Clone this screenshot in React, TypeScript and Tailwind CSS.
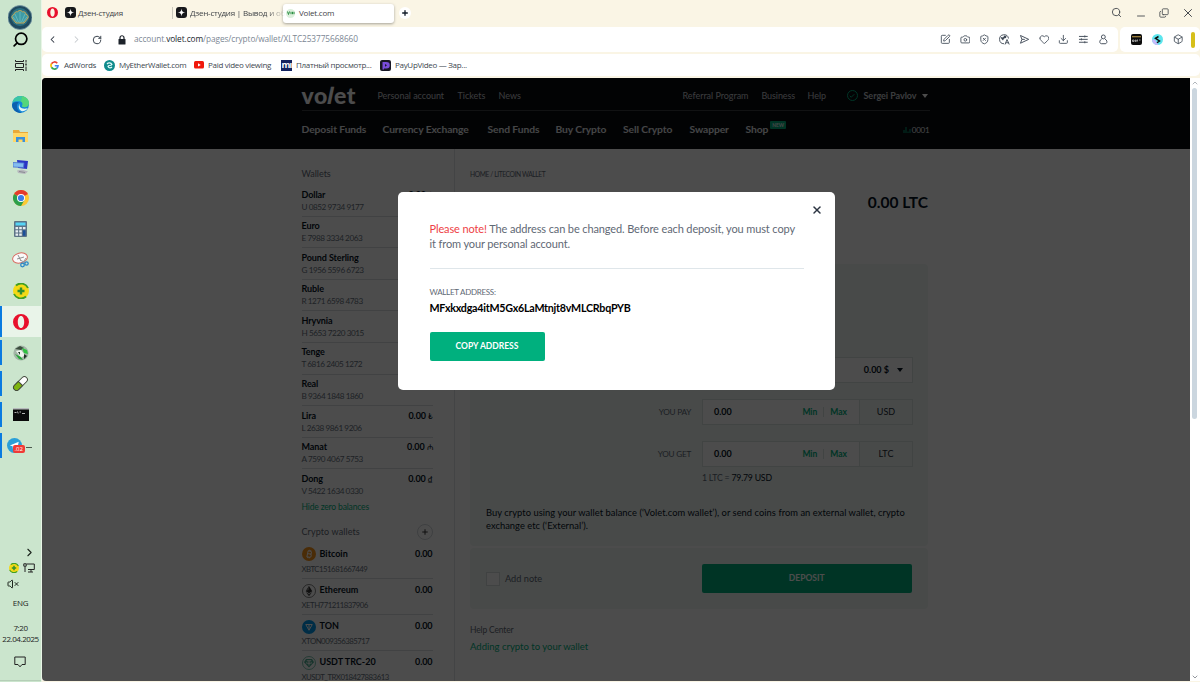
import React from "react";
import {
  Box,
  Camera,
  ChevronLeft,
  ChevronRight,
  ChevronUp,
  Check,
  Copy,
  Download,
  Heart,
  Minus,
  Plus,
  RotateCw,
  Search,
  ShieldX,
  SquarePen,
  VolumeX,
  X,
} from "lucide-react";

const wallets = [
  { name: "Dollar", number: "U 0852 9734 9177", sign: "$" },
  { name: "Euro", number: "E 7988 3334 2063", sign: "€" },
  { name: "Pound Sterling", number: "G 1956 5596 6723", sign: "£" },
  { name: "Ruble", number: "R 1271 6598 4783", sign: "₽" },
  { name: "Hryvnia", number: "H 5653 7220 3015", sign: "₴" },
  { name: "Tenge", number: "T 6816 2405 1272", sign: "₸" },
  { name: "Real", number: "B 9364 1848 1860", sign: "R$" },
  { name: "Lira", number: "L 2638 9861 9206", sign: "₺" },
  { name: "Manat", number: "A 7590 4067 5753", sign: "₼" },
  { name: "Dong", number: "V 5422 1634 0330", sign: "₫" },
];

const OperaIcon = ({ size }: { size: number }) => (
  <svg width={size} height={size} viewBox="0 0 16 16">
    <path
      fillRule="evenodd"
      fill="#e8102c"
      d="M8 0a8 8 0 1 0 0 16A8 8 0 0 0 8 0zm0 2c2 0 3.2 2.700 3.200 6S10 14 8 14 4.800 11.300 4.800 8 6 2 8 2z"
    />
  </svg>
);

const ZenIcon = () => (
  <svg width="11" height="11" viewBox="0 0 22 22" className="shrink-0">
    <rect width="22" height="22" rx="6" fill="#17181b" />
    <path d="M11 3c.3 5.500 2.500 7.700 8 8-5.500.3-7.700 2.500-8 8-.3-5.500-2.500-7.700-8-8 5.500-.3 7.700-2.500 8-8z" fill="#fff" />
  </svg>
);

const PlusBallIcon = ({ size }: { size: number }) => (
  <svg width={size} height={size} viewBox="0 0 16 16">
    <circle cx="8" cy="8" r="8" fill="#f4d916" />
    <path d="M1 11a7.600 7.600 0 0 0 12 2.500M15 5A7.600 7.600 0 0 0 3 2.500" stroke="#3f9f27" strokeWidth="1.800" fill="none" />
    <path d="M8 4.500v7M4.500 8h7" stroke="#2f8f2f" strokeWidth="2.400" />
  </svg>
);

const EdgeIcon = () => (
  <svg width="17" height="17" viewBox="0 0 16 16">
    <circle cx="8" cy="8" r="8" fill="#1488d8" />
    <path d="M.4 6C1.500 2 4.500 0 8 0c5 0 8 3.500 8 6.600 0 2.600-2 4-4.200 4-2 0-2.800-.9-2.200-1.600.9-1.300.2-3.800-2.700-4C4.200 4.700 1.800 5.300.4 6z" fill="#3bc7a4" />
    <path d="M9.500 0C14 1 16 4 16 6.600c0 2.600-2 4-4.200 4-2 0-2.800-.9-2.200-1.600.9-1.300.5-3-1-3.700z" fill="#5fdd6a" opacity=".7" />
    <path d="M6.500 6C3 8 4.500 14.500 9.500 15.800 5 16.600.4 13.500 0 8.500.4 6 3.500 5 6.500 6z" fill="#0d5fae" />
    <path d="M7.200 7.300c-1 3 2 5.800 7.600 4.200-1.600 2.400-4 3-5.400 2.800-2.800-.6-4-4.600-2.200-7z" fill="#e4f5f3" />
  </svg>
);

const FolderIcon = () => (
  <svg width="15" height="14" viewBox="0 0 15 14">
    <path d="M0 1h6l1 2h8v10H0z" fill="#e9a93a" />
    <path d="M0 4h15v9H0z" fill="#ffd766" />
    <path d="M3 13V8h9v5h-2.500v-2.500h-4V13z" fill="#3a91dc" />
  </svg>
);

const RemoteIcon = () => (
  <svg width="16" height="16" viewBox="0 0 16 16">
    <path d="M4 1l11 1-1 8-9-1z" fill="#2a35c5" />
    <path d="M0 3.500l11 .5-.5 4.500L0 8z" fill="#84bdf0" stroke="#4a72ce" strokeWidth=".8" />
    <path d="M4 11.500l5-1 6 2-3 2.500-7-1z" fill="#b6b8bd" />
    <path d="M6 12.500l6 1" stroke="#7d8088" strokeWidth=".8" />
  </svg>
);

const ChromeIcon = () => (
  <svg width="16" height="16" viewBox="0 0 16 16">
    <circle cx="8" cy="8" r="8" fill="#fcc934" />
    <path d="M8 8L1.070 4A8 8 0 0 1 14.930 4z" fill="#e33b2e" />
    <path d="M8 8L1.070 4A8 8 0 0 0 8 16l3.500-6z" fill="#2c9f4b" />
    <circle cx="8" cy="8" r="4" fill="#fff" />
    <circle cx="8" cy="8" r="3.100" fill="#3b7de9" />
  </svg>
);

const CalculatorIcon = () => (
  <svg width="13" height="16" viewBox="0 0 13 16">
    <rect width="13" height="16" rx="1" fill="#5d7386" />
    <rect x="1.500" y="1.500" width="10" height="3" fill="#55d4f5" />
    <path d="M1.500 6h2.600v2.300H1.500zM5.200 6h2.600v2.300H5.200zM8.900 6h2.600v2.300H8.900zM1.500 9.300h2.600v2.300H1.500zM5.200 9.300h2.600v2.300H5.200zM1.500 12.500h2.600v2.300H1.500zM5.200 12.500h2.600v2.300H5.200z" fill="#e8eef2" />
    <path d="M8.900 9.300h2.600v5.500H8.900z" fill="#1b4f9a" />
  </svg>
);

const SnipIcon = () => (
  <svg width="17" height="16" viewBox="0 0 17 16">
    <ellipse cx="8" cy="6" rx="7.500" ry="5" transform="rotate(-15 8 6)" fill="#fafafa" stroke="#d86a60" />
    <path d="M6 3l3 6M5 7l7-2" stroke="#777" strokeWidth=".8" />
    <path d="M8 8l6 3M14 6l-4 6" stroke="#999" />
    <circle cx="10.500" cy="13" r="1.800" fill="none" stroke="#2b87c8" strokeWidth="1.300" />
    <circle cx="14.500" cy="11.500" r="1.700" fill="none" stroke="#2b87c8" strokeWidth="1.300" />
  </svg>
);

const GreenBallIcon = () => (
  <svg width="16" height="16" viewBox="0 0 16 16">
    <circle cx="8" cy="8" r="7.600" fill="#a3b5a7" />
    <path d="M2 4l5-3 4 2-3 2z" fill="#3a4d3d" />
    <path d="M9 3l5 2 1 4-4-1z" fill="#2fc341" />
    <path d="M3 6l5-1 4 5-4 3z" fill="#eef5ee" />
    <path d="M2 9l4 5 4 1-2-3z" fill="#27a63a" />
    <path d="M11 9l3 2-3 3zM5 7l2 0 0 3z" fill="#1f3424" />
  </svg>
);

const PillIcon = () => (
  <svg width="17" height="17" viewBox="0 0 17 17">
    <g transform="rotate(-45 8.500 8.500)" stroke="#444a3e">
      <rect x="0" y="5.500" width="17" height="6" rx="3" fill="#fff" />
      <path d="M8.500 5.500H3a3 3 0 0 0 0 6h5.500z" fill="#7eb50f" />
    </g>
  </svg>
);

const ConsoleIcon = () => (
  <svg width="16" height="13" viewBox="0 0 16 13">
    <rect width="16" height="13" fill="#0a0a0a" />
    <rect width="16" height="1.500" fill="#b5b9bb" />
    <path d="M1.500 4.500h2M4.500 3.500l.7 2M6.500 4H8M9 5.500h3" stroke="#ddd" strokeWidth=".8" />
  </svg>
);

const TelegramIcon = () => (
  <div className="relative flex w-full items-center pl-[5px]">
    <svg width="15" height="15" viewBox="0 0 16 16">
      <circle cx="8" cy="8" r="8" fill="#2a9fd8" />
      <path d="M3 8l9.500-4-1.700 8.200-3-2.200-1.600 1.500-.2-2.600z" fill="#fff" />
    </svg>
    <span className="absolute left-[11px] top-[7px] h-[8px] rounded-[2px] bg-[#f03a36] px-[2px] text-[6px] leading-[8px] text-white">
      .02
    </span>
    <span className="ml-[4px] mt-[3px] h-px w-[6px] shrink-0 bg-[#4c5a4e]" />
  </div>
);

const ShellIcon = () => (
  <svg width="24" height="25" viewBox="0 0 24 25">
    <circle cx="12" cy="12.500" r="12" fill="#1f4a5f" stroke="#7998a6" strokeWidth=".8" />
    <circle cx="12" cy="12" r="9" fill="#2c7184" />
    <path
      d="M8 18l-4-5c-.6-2 1-3.500 2-3.500C6 7.500 8.500 6 9.500 7c1-2 4-2 5 0 1.500-1 3.500.5 3.500 2.500 1.500 0 2.600 1.500 2 3.500l-4 5z"
      fill="#3d9ba5"
      stroke="#cda955"
    />
    <path d="M12 18V7M10.500 17L7 9M13.500 17L17 9M9 17l-4-5M15 17l4-5" stroke="#80c7ca" strokeWidth=".6" />
  </svg>
);

const TaskViewIcon = () => (
  <svg width="12" height="11" viewBox="0 0 12 11" fill="none" stroke="#222">
    <path d="M.5 0v1.500h8V0M.5 11V9.500h8V11M.5 3.500h8v4h-8zM11 0v2.500M11 6.500V11" />
    <path d="M10.300 3.500h1.400v2h-1.400z" fill="#222" stroke="none" />
  </svg>
);

const taskbar = [
  { id: "edge", icon: <EdgeIcon /> },
  { id: "folder", icon: <FolderIcon /> },
  { id: "remote", icon: <RemoteIcon /> },
  { id: "chrome", icon: <ChromeIcon /> },
  { id: "calc", icon: <CalculatorIcon /> },
  { id: "snip", icon: <SnipIcon /> },
  { id: "plus", icon: <PlusBallIcon size={16} /> },
  { id: "opera", icon: <OperaIcon size={16} />, open: true, active: true },
  { id: "ball", icon: <GreenBallIcon />, open: true },
  { id: "pill", icon: <PillIcon />, open: true },
  { id: "console", icon: <ConsoleIcon />, open: true },
  { id: "telegram", icon: <TelegramIcon />, open: true },
];

const Taskbar = () => (
  <aside className="flex w-[42px] shrink-0 flex-col border-r border-[#e8f5e6] bg-[#cbe5cd] text-[#1c241d]">
    <div className="mt-[5px] flex h-[24px] justify-center pr-px">
      <ShellIcon />
    </div>
    <div className="flex h-[21px] items-center justify-center">
      <Search size={17} strokeWidth={2.400} className="-scale-x-100 text-black" />
    </div>
    <div className="mb-[9px] flex h-[30px] items-center justify-center">
      <TaskViewIcon />
    </div>
    {taskbar.map((item) => (
      <div
        key={item.id}
        className={
          item.active
            ? "flex h-[31px] items-stretch bg-[#e9f4e9]"
            : "flex h-[31px] items-stretch"
        }
      >
        <span
          className={
            item.active
              ? "w-[1.500px] bg-[#0a7be0]"
              : item.open
                ? "my-[3px] w-[1.500px] bg-[#0a7be0]"
                : "w-[1.500px]"
          }
        />
        <div className="flex flex-1 items-center justify-center pr-px">{item.icon}</div>
      </div>
    ))}
    <div className="flex-1" />
    <div className="flex h-[16px] items-center justify-end pr-[5px]">
      <ChevronRight size={13} strokeWidth={2} />
    </div>
    <div className="flex h-[16px] items-center gap-[4px] pl-[9px]">
      <PlusBallIcon size={10} />
      <svg width="12" height="10" viewBox="0 0 12 10" fill="none" stroke="#222">
        <path d="M3.500 1H11.300v5.500H5M8 6.500V9M5 9h5M.8.800h2.400v2.400H.8zM2 3.500V9" />
      </svg>
    </div>
    <div className="flex h-[15px] items-center pl-[7px]">
      <VolumeX size={12} strokeWidth={2} />
    </div>
    <p className="mt-[4px] text-center text-[8px] leading-[16px] tracking-[-0.2px]">ENG</p>
    <p className="mt-[11px] text-center text-[8px] leading-[11px] tracking-[-0.4px]">7:20</p>
    <p className="text-center text-[8px] leading-[11px] tracking-[-0.45px]">22.04.2025</p>
    <div className="flex h-[36px] items-center justify-center pr-px">
      <svg width="12" height="12" viewBox="0 0 12 12" fill="none" stroke="#222">
        <path d="M.8 1h10.400v7.500H8L6 10.800 4 8.500H.8z" />
      </svg>
    </div>
    <div className="h-[2px] border-t border-[#b5cfb7]" />
  </aside>
);

const TabStrip = () => (
  <div className="flex h-[27px] items-center whitespace-nowrap pb-[2px] text-[8px] tracking-[-0.2px] text-[#3f4347]">
    <div className="flex w-[23px] pl-[5px]">
      <OperaIcon size={11} />
    </div>
    <div className="flex w-[107px] items-center gap-[2px]">
      <ZenIcon />
      <span>Дзен-студия</span>
    </div>
    <div className="flex w-[111px] items-center gap-[3px] border-l border-[#c9c6ba] pl-[3px]">
      <ZenIcon />
      <span className="[mask-image:linear-gradient(to_right,black_80%,transparent)]">Дзен-студия | Вывод и об</span>
    </div>
    <div className="mt-px flex h-[19px] w-[111px] items-center gap-[4px] rounded-[3px] bg-white pl-[3px] shadow-[0_1px_3px_rgba(0,0,0,0.35)]">
      <span className="flex h-[9px] w-[9px] items-center justify-center rounded-full bg-[#dcefdc]">
        <svg width="8" height="4" viewBox="0 0 8 4" fill="none" stroke="#2b8f43">
          <path d="M.5.5l1 3 1-3M4 .8v2.400M5.500.8v2.400M7 .8v2.400" />
        </svg>
      </span>
      <span>Volet.com</span>
    </div>
    <span className="ml-[5px] flex h-[12px] w-[12px] items-center justify-center rounded-full bg-white">
      <Plus size={8} strokeWidth={4} className="text-[#111b28]" />
    </span>
    <div className="ml-auto flex items-center text-[#45494e]">
      <Search size={11} strokeWidth={2} className="mr-[13px]" />
      <Minus size={12} strokeWidth={1.800} className="mr-[12px] mt-[6px]" />
      <Copy size={10} strokeWidth={2} className="mr-[12px] -scale-x-100 rotate-180" />
      <X size={14} strokeWidth={1.700} className="mr-[5px]" />
    </div>
  </div>
);

const TranslateIcon = () => (
  <svg width="11" height="11" viewBox="0 0 22 22" fill="none" stroke="#3d4753" strokeWidth="1.800">
    <path d="M10 19.500A9 9 0 1 1 19 9" />
    <path d="M3 6l5 1 3-4 4 1-1 4-4 1-2 4-3-3z" fill="#3d4753" stroke="none" />
    <path d="M12 21l4-10 4.500 10M13.500 17.500h6" />
  </svg>
);

const AddressBar = () => (
  <div className="flex h-[25px] gap-[2px]">
    <div className="flex flex-1 items-center rounded-[5px] bg-white text-[#2b3440]">
      <ChevronLeft size={11} strokeWidth={2.200} className="ml-[5px]" />
      <ChevronRight size={11} strokeWidth={2.200} className="ml-[13px] text-[#c6cace]" />
      <RotateCw size={10} strokeWidth={2.200} className="ml-[10px]" />
      <svg width="8" height="10" viewBox="0 0 16 20" className="ml-[16px] shrink-0">
        <rect x="1" y="8" width="14" height="11" rx="1" fill="#1c222a" />
        <path d="M4 9V5.500a4 4 0 0 1 8 0V9" fill="none" stroke="#1c222a" strokeWidth="2.400" />
      </svg>
      <span className="ml-[8px] text-[8.300px] tracking-[-0.09px] text-[#7c8794]">
        account.<span className="text-[#20262e]">volet.com</span>/pages/crypto/wallet/XLTC253775668660
      </span>
      <div className="ml-auto flex items-center gap-[9px] pr-[9.500px] text-[#46505c]">
        <SquarePen size={10.700} />
        <Camera size={10.700} />
        <ShieldX size={10.700} />
        <TranslateIcon />
        <svg width="10.700" height="10.700" viewBox="0 0 22 22" fill="none" stroke="#46505c" strokeWidth="2">
          <path d="M3 3l17 8L3 19l3-8zM6 11h6" strokeLinejoin="round" />
        </svg>
        <Heart size={10.700} />
        <Download size={10.700} />
        <svg width="10.700" height="10.700" viewBox="0 0 22 22" fill="none" stroke="#46505c" strokeWidth="2">
          <path d="M2 5h18M2 11h18M2 17h18M14 3v4M7 9v4M14 15v4" />
        </svg>
        <svg width="10.700" height="10.700" viewBox="0 0 22 22" fill="none" stroke="#46505c" strokeWidth="2">
          <circle cx="11" cy="6" r="4" />
          <path d="M7.500 10.500C2 13 3 20 7 20h8c4 0 5-7-.5-9.500" />
        </svg>
      </div>
    </div>
    <div className="flex w-[80px] items-center rounded-[5px] bg-white">
      <svg width="11" height="11" viewBox="0 0 22 22" className="ml-[11px]">
        <rect width="22" height="22" rx="4" fill="#0c0c0c" />
        <path d="M2 5.500h18" stroke="#c9a24a" strokeWidth="2" />
        <path d="M3 12h3v3H3zM8.500 12h2v3h-2zM13 11v4M16 12h3" stroke="#ddd" strokeWidth="1.300" fill="none" />
      </svg>
      <svg width="11" height="11" viewBox="0 0 22 22" className="ml-[10px]">
        <circle cx="11" cy="11" r="11" fill="#5de6ee" />
        <path d="M0 11a11 11 0 0 0 13 10.800L6 11z" fill="#c8b9fa" />
        <path d="M13 5L7 8.500l8 5.500-5 3.500" stroke="#111" strokeWidth="3" fill="none" />
      </svg>
      <Box size={10.500} className="ml-[10px] text-[#46505c]" />
      <span className="ml-[7.500px] h-[16px] w-[4px] rounded-[2px] bg-[#d6bf1b]" />
    </div>
  </div>
);

const Bookmarks = () => (
  <div className="flex h-[22px] items-center whitespace-nowrap rounded-[5px] bg-white text-[8px] tracking-[-0.3px] text-[#40474f]">
    <span className="flex w-[54px] items-center gap-[5px] pl-[8px]">
      <svg width="9" height="9" viewBox="0 0 18 18" fill="none" strokeWidth="3.400" className="shrink-0">
        <path d="M14.500 4.500A7 7 0 0 0 3 5.500" stroke="#ea4335" />
        <path d="M3 5.500a7 7 0 0 0 0 7" stroke="#fbbc05" />
        <path d="M3 12.500a7 7 0 0 0 10.500 2" stroke="#34a853" />
        <path d="M13.500 14.500A7 7 0 0 0 16 9.500H9.500" stroke="#4285f4" />
      </svg>
      AdWords
    </span>
    <span className="flex w-[90px] items-center gap-[4px] pl-[8px]">
      <svg width="11" height="11" viewBox="0 0 22 22" className="shrink-0">
        <circle cx="11" cy="11" r="11" fill="#0f8b8d" />
        <path d="M6 8a6 6 0 0 1 10 1c-3 4-7 0-8 4 2 4 6 3 8 1" stroke="#e2fbfb" strokeWidth="2.400" fill="none" />
      </svg>
      MyEtherWallet.com
    </span>
    <span className="flex w-[87px] items-center gap-[4px] pl-[8px]">
      <svg width="10" height="8" viewBox="0 0 20 16" className="shrink-0">
        <rect width="20" height="15" rx="3" fill="#f0190c" />
        <path d="M8 4.500v6.500l5.500-3.250z" fill="#fff" />
      </svg>
      Paid video viewing
    </span>
    <span className="flex w-[99px] items-center gap-[4px] pl-[8px]">
      <span className="h-[11px] w-[11px] shrink-0 bg-[#13235f] text-center text-[9px] font-bold leading-[9px] tracking-[-0.8px] text-white">
        mı
      </span>
      Платный просмотр...
    </span>
    <span className="flex items-center gap-[4px] pl-[8px]">
      <svg width="11" height="11" viewBox="0 0 22 22" className="shrink-0">
        <rect width="22" height="22" rx="4" fill="#191825" />
        <path d="M5 4h8a6 6 0 0 1 0 13H8v2H5z" fill="#7a4ddb" />
        <path d="M10 8l4 2.700-4 2.700z" fill="#191825" />
      </svg>
      PayUpVideo — Зар...
    </span>
  </div>
);

const Header = () => (
  <header className="h-[71px] bg-[#080a10] text-white">
    <div className="ml-[259.500px] w-[628px]">
      <div className="flex h-[33px] items-center border-b border-[#3a3d42] pt-[3px] text-[9px] text-[#c4c8cd]">
        <span className="w-[76px] pb-[2px] text-[23px] font-black leading-[26px] tracking-[0.500px] text-white">
          vo<span className="inline-block -skew-x-12">l</span>et
        </span>
        <span className="w-[80px] tracking-[-0.05px]">Personal account</span>
        <span className="w-[41px]">Tickets</span>
        <span>News</span>
        <span className="ml-auto w-[79px] tracking-[-0.03px]">Referral Program</span>
        <span className="w-[46px] tracking-[-0.1px]">Business</span>
        <span className="w-[39px]">Help</span>
        <span className="mr-[6px] flex h-[11px] w-[11px] items-center justify-center rounded-full border border-[#00b07e] text-[#00b07e]">
          <Check size={6} strokeWidth={4} />
        </span>
        <span className="w-[58px] font-bold tracking-[-0.05px]">Sergei Pavlov</span>
        <span className="mr-[2px] border-x-[3px] border-t-[4px] border-x-transparent border-t-white" />
      </div>
      <nav className="flex h-[36px] items-center pt-[2px] text-[10.300px] font-bold tracking-[-0.09px] text-[#e4e7ea]">
        <span className="w-[81px]">Deposit Funds</span>
        <span className="w-[105px]">Currency Exchange</span>
        <span className="w-[68px]">Send Funds</span>
        <span className="w-[67.500px]">Buy Crypto</span>
        <span className="w-[66.500px]">Sell Crypto</span>
        <span className="w-[56px]">Swapper</span>
        <span>Shop</span>
        <span className="mb-[11px] ml-[2px] h-[8px] rounded-[1px] bg-[#00b07e] px-[2px] text-[5px] leading-[8px]">NEW</span>
        <span className="ml-auto flex items-center gap-px text-[8px] font-normal tracking-[-0.2px]">
          <svg width="8" height="6" viewBox="0 0 8 6" stroke="#00b07e">
            <path d="M1 3v3M3 0v6M5 4.500V6M7 2v4" />
          </svg>
          0001
        </span>
      </nav>
    </div>
  </header>
);

const BitcoinIcon = () => (
  <svg width="14" height="14" viewBox="0 0 28 28">
    <circle cx="14" cy="14" r="14" fill="#f7931a" />
    <path d="M11 8v12M11 8h4.500a2.800 2.800 0 0 1 0 5.700H11h5a3.100 3.100 0 0 1 0 6.300h-6M13 5.500V8M16 5.500V8M13 20v2.500M16 20v2.500" fill="none" stroke="#fff" strokeWidth="2" transform="rotate(12 14 14)" />
  </svg>
);

const EthereumIcon = () => (
  <svg width="14" height="14" viewBox="0 0 28 28">
    <circle cx="14" cy="14" r="13" fill="#fff" stroke="#555" strokeWidth="1.500" />
    <path d="M14 4l6.500 10.500L14 18.500 7.500 14.500z" fill="#333" />
    <path d="M7.500 16l6.500 4 6.500-4L14 24.500z" fill="#555" />
    <path d="M14 4v7.500l-6.500 3z" fill="#777" />
  </svg>
);

const TonIcon = () => (
  <svg width="14" height="14" viewBox="0 0 28 28">
    <circle cx="14" cy="14" r="14" fill="#0098ea" />
    <path d="M7.500 9h13L14 20.500zM14 9v11" fill="none" stroke="#fff" strokeWidth="2" strokeLinejoin="round" />
  </svg>
);

const TetherIcon = () => (
  <svg width="14" height="14" viewBox="0 0 28 28">
    <circle cx="14" cy="14" r="13" fill="#fff" stroke="#50af95" strokeWidth="1.500" />
    <path d="M8 6h12l4 6.500L14 23 4 12.500z" fill="#50af95" />
    <path d="M9.500 9.500h9M14 9.500V19M8 13.500c2 1.500 10 1.500 12 0" stroke="#fff" strokeWidth="2" fill="none" />
  </svg>
);

const cryptoWallets = [
  { name: "Bitcoin", number: "XBTC151681667449", icon: <BitcoinIcon /> },
  { name: "Ethereum", number: "XETH771211837906", icon: <EthereumIcon /> },
  { name: "TON", number: "XTON009356385717", icon: <TonIcon /> },
  { name: "USDT TRC-20", number: "XUSDT_TRX018427883613", icon: <TetherIcon /> },
];

const WalletList = () => (
  <div className="w-[153px] shrink-0 border-r border-[#e2e5e8] pr-[21px] pt-[19px]">
    <p className="mb-[5px] text-[9px] leading-[12px] tracking-[-0.02px] text-[#5f6975]">Wallets</p>
    <div>
      {wallets.map((wallet) => (
        <div key={wallet.name} className="h-[31.600px] border-b border-[#d9dee2] pt-[3.500px] last:border-b-0">
          <div className="flex justify-between text-[9px] font-bold leading-[12px] tracking-[-0.1px] text-[#06131f]">
            <span>{wallet.name}</span>
            <span>
              0.00 <span className="text-[8px] font-normal">{wallet.sign}</span>
            </span>
          </div>
          <p className="text-[8.200px] leading-[13px] tracking-[-0.45px] text-[#66707c]">{wallet.number}</p>
        </div>
      ))}
    </div>
    <p className="-mt-px text-[8.500px] leading-[14px] tracking-[-0.15px] text-[#00b07e]">Hide zero balances</p>
    <div className="mb-[3px] mt-[10px] flex h-[16px] items-center justify-between text-[9px] text-[#5f6975]">
      <span className="tracking-[0.1px]">Crypto wallets</span>
      <span className="flex h-[16px] w-[16px] items-center justify-center rounded-full border border-[#d0d5da] text-[#333]">
        <Plus size={8} strokeWidth={3} />
      </span>
    </div>
    {cryptoWallets.map((wallet) => (
      <div key={wallet.name} className="h-[36.100px] border-b border-[#d9dee2] pt-[4px]">
        <div className="flex h-[15px] items-center text-[9px] font-bold text-[#06131f]">
          {wallet.icon}
          <span className="-mt-px ml-[4px]">{wallet.name}</span>
          <span className="-mt-px ml-auto tracking-[-0.1px]">0.00</span>
        </div>
        <p className="text-[7.800px] leading-[14px] tracking-[-0.5px] text-[#66707c]">{wallet.number}</p>
      </div>
    ))}
  </div>
);

const AmountRow = ({ label, currency }: { label: string; currency: string }) => (
  <div className="mb-[16px] flex h-[26px] items-center">
    <span className="w-[205px] text-right text-[8.200px] tracking-[-0.25px] text-[#5f6975]">{label}</span>
    <div className="ml-[11px] flex h-full w-[211px] items-center border border-[#dbe3e2] bg-white text-[9px]">
      <span className="ml-[11px] font-bold text-[#06131f]">0.00</span>
      <span className="ml-auto text-[8.500px] font-bold text-[#00b07e]">Min</span>
      <span className="mx-[6px] h-[10px] w-px bg-[#dbe3e2]" />
      <span className="mr-[12px] text-[8.500px] font-bold text-[#00b07e]">Max</span>
      <span className="flex h-full w-[53px] items-center justify-center border-l border-[#dbe3e2] bg-[#f1f8f5] text-[#232b35]">
        {currency}
      </span>
    </div>
  </div>
);

const DepositForm = () => (
  <main className="ml-[15.500px] w-[458px] shrink-0 pt-[19px]">
    <p className="text-[6.700px] leading-[12px] tracking-[-0.4px] text-[#5f6975]">HOME / LITECOIN WALLET</p>
    <p className="mt-[12px] text-right text-[15.500px] font-bold leading-[20px] text-[#06131f]">0.00 LTC</p>
    <section className="mt-[52px] h-[282px] rounded-[4px] bg-[#f1f8f5] pt-[93px]">
      <div className="mb-[16px] flex h-[26px] items-center pl-[232px]">
        <div className="flex h-full w-[211px] items-center justify-end border border-[#dbe3e2] bg-white text-[9px] font-bold text-[#06131f]">
          0.00 $
          <span className="ml-[8px] mr-[9px] border-x-[3px] border-t-[4px] border-x-transparent border-t-[#06131f]" />
        </div>
      </div>
      <div className="pl-[16px]">
        <AmountRow label="YOU PAY" currency="USD" />
        <AmountRow label="YOU GET" currency="LTC" />
      </div>
      <p className="-mt-[12px] pl-[232px] text-[8.700px] leading-[14px] tracking-[-0.2px] text-[#5f6975]">
        1 LTC = <span className="text-[#06131f]">79.79 USD</span>
      </p>
      <p className="mt-[21px] whitespace-nowrap pl-[16px] text-[9.350px] leading-[13px] tracking-[0.04px] text-[#06131f]">
        Buy crypto using your wallet balance (‘Volet.com wallet’), or send coins from an external wallet, crypto
        <br />
        exchange etc (‘External’).
      </p>
    </section>
    <section className="mt-[2px] flex h-[61px] items-center rounded-[4px] bg-[#f1f8f5] px-[16px]">
      <span className="h-[14px] w-[14px] border border-[#d5dedc] bg-white" />
      <span className="ml-[5px] text-[9.200px] text-[#5f6975]">Add note</span>
      <button className="ml-auto h-[29px] w-[210.500px] rounded-[2px] bg-[#00b07e] text-[8.500px] font-bold text-white">DEPOSIT</button>
    </section>
    <p className="mt-[14px] text-[8.500px] leading-[14px] tracking-[-0.15px] text-[#5f6975]">Help Center</p>
    <p className="mt-[3px] text-[9.500px] leading-[14px] text-[#00b07e]">Adding crypto to your wallet</p>
  </main>
);

const AddressModal = () => (
  <div className="absolute inset-0 bg-black/70">
    <div className="ml-[356px] mt-[113.500px] h-[198px] w-[437px] rounded-[5px] bg-white px-[31.500px] pt-[29px]">
      <X size={12} strokeWidth={3} className="absolute left-[769px] top-[126px] text-[#2c3542]" />
      <p className="whitespace-nowrap text-[11px] leading-[15.700px] tracking-[-0.12px] text-[#5f6975]">
        <span className="text-[#ee3f46]">Please note!</span> The address can be changed. Before each deposit, you must copy
        <br />
        it from your personal account.
      </p>
      <div className="mt-[16.500px] h-px bg-[#dfe6ea]" />
      <p className="mt-[16.500px] text-[8px] leading-[12px] tracking-[-0.28px] text-[#5f6975]">WALLET ADDRESS:</p>
      <p className="mt-[2px] text-[10.700px] font-bold leading-[16px] tracking-[-0.24px] text-black">
        MFxkxdga4itM5Gx6LaMtnjt8vMLCRbqPYB
      </p>
      <button className="mt-[16px] block h-[29px] w-[115px] rounded-[2px] bg-[#00b07e] text-[8.500px] font-bold text-white">
        COPY ADDRESS
      </button>
    </div>
  </div>
);

const App = () => {
  return (
    <div className="flex h-[682px] w-[1200px] overflow-hidden bg-[#faf5e5] font-['Open_Sans',sans-serif]">
      <Taskbar />
      <div className="flex min-w-0 flex-1 flex-col">
        <TabStrip />
        <AddressBar />
        <div className="mb-[2px] mt-[2px]">
          <Bookmarks />
        </div>
        <div className="flex min-h-0 flex-1 pb-[1px]">
          <div className="relative w-[1148px] overflow-hidden rounded-l-[4px] bg-white font-['Lato',sans-serif]">
            <Header />
            <div className="ml-[259.500px] flex h-[540px] w-[628px]">
              <WalletList />
              <DepositForm />
            </div>
            <AddressModal />
          </div>
          <div className="flex flex-1 flex-col items-center bg-white pr-px">
            <ChevronUp size={8} className="mt-px text-[#8b929a]" />
            <span className="mt-px h-[331px] w-[5px] rounded-[3px] bg-[#cbd6df]" />
            <ChevronUp size={8} className="mt-auto rotate-180 text-[#5d646c]" />
          </div>
        </div>
      </div>
    </div>
  );
};

export default App;
